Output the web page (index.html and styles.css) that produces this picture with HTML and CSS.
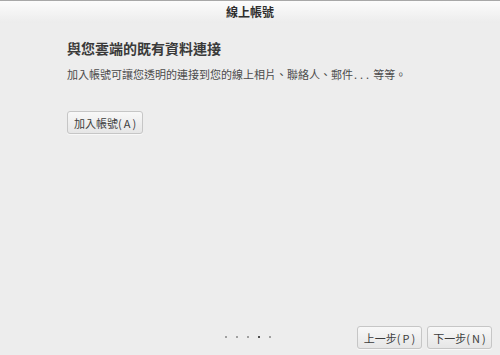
FILE: index.html
```html
<!DOCTYPE html>
<html lang="zh-Hant">
<head>
  <meta charset="UTF-8"/>
  <title>線上帳號</title>
  <link rel="stylesheet" href="styles.css">
</head>
<body>
  <div class="window">
    <header class="titlebar">線上帳號</header>

    <main class="content">
      <h2>與您雲端的既有資料連接</h2>
      <p>加入帳號可讓您透明的連接到您的線上相片、聯絡人、郵件<span class="ellipsis">...</span>等等。</p>
      <button class="btn">加入帳號(<span class="key">A</span>)</button>
    </main>

    <footer class="footer">
      <div class="dots">
        <span></span><span></span><span></span><span class="on"></span><span></span>
      </div>
      <div class="nav">
        <button class="btn">上一步(<span class="key">P</span>)</button>
        <button class="btn">下一步(<span class="key">N</span>)</button>
      </div>
    </footer>
  </div>
</body>
</html>
```

FILE: styles.css
```css
* { margin:0; padding:0; box-sizing:border-box; }
html, body { height:100%; }
body {
  font-family:"Noto Sans CJK TC", "Noto Sans", sans-serif;
  background:#ededed; color:#3c3c3c;
}
.window {
  height:100%; display:flex; flex-direction:column;
  border-top:1px solid #a8a8a8;
}
.titlebar {
  height:22px; line-height:21px; text-align:center;
  font-size:12px; font-weight:bold; color:#2e2e2e;
  background:linear-gradient(#fcfcfc, #ececec);
}
.content {
  flex:1; padding:15px 67px 0;
}
.content h2 {
  font-size:14px; font-weight:bold; line-height:20px; color:#3a3a3a;
}
.content p {
  margin-top:8px; font-size:11px; line-height:16px; color:#4a4a4a;
}
.ellipsis { letter-spacing:3px; margin:0 1px; }
.content .btn { margin-top:29px; }
.btn {
  font-family:inherit; font-size:11px; color:#3c3c3c;
  height:23px; padding:0 6px; white-space:nowrap;
  border:1px solid #c6c6c6; border-radius:3px;
  background:linear-gradient(#f8f8f8, #e6e6e6);
  box-shadow:0 1px 0 rgba(255,255,255,0.6);
}
.key { padding:0 2px; }
.footer {
  display:flex; align-items:flex-end; justify-content:flex-end;
  padding:0 8px 6px 0;
}
.dots { display:flex; gap:9px; margin:0 86px 11px 0; }
.dots span { width:2px; height:2px; background:#a0a0a0; }
.dots span.on { background:#505050; }
.nav { display:flex; gap:5px; }
.nav .btn { width:65px; padding:0 2px; }
```
